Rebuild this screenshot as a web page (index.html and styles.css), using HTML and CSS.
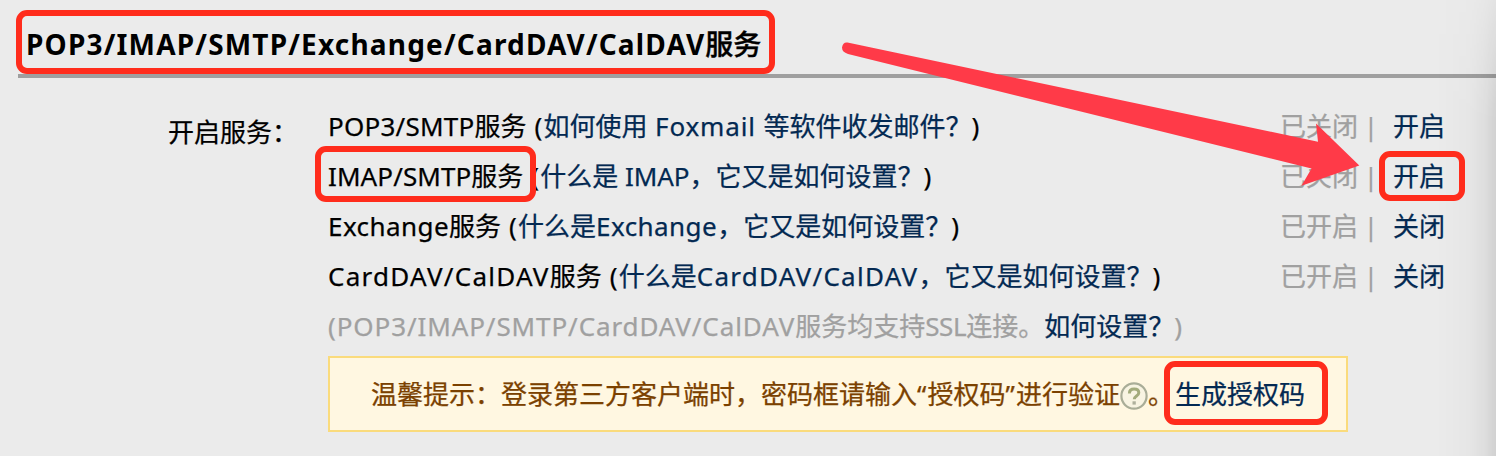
FILE: index.html
```
<!DOCTYPE html>
<html lang="zh-CN">
<head>
<meta charset="utf-8">
<title>POP3/IMAP/SMTP/Exchange/CardDAV/CalDAV服务</title>
<link rel="stylesheet" href="styles.css">
</head>
<body>
<main class="page">
  <h2 class="title"><span class="title-latin">POP3/IMAP/SMTP/Exchange/CardDAV/CalDAV</span><span class="title-cjk">服务</span></h2>
  <section class="services">
    <div class="label">开启服务：</div>
    <div class="content">
      <div class="row">
        <div><span class="w-pop">POP3/SMTP</span>服务<span class="paren"> (</span><a class="link">如何使用<span class="w-foxmail"> Foxmail </span>等软件收发邮件？</a>)</div>
        <div class="state"><span>已关闭</span><span class="bar">|</span><a class="link">开启</a></div>
      </div>
      <div class="row">
        <div><span class="w-imap">IMAP/SMTP</span>服务<span class="paren"> (</span><a class="link">什么是<span class="w-imap-short"> IMAP</span>，它又是如何设置？</a>)</div>
        <div class="state"><span>已关闭</span><span class="bar">|</span><a class="link">开启</a></div>
      </div>
      <div class="row">
        <div><span class="w-exchange">Exchange</span>服务<span class="paren"> (</span><a class="link">什么是<span class="w-exchange">Exchange</span>，它又是如何设置？</a>)</div>
        <div class="state"><span>已开启</span><span class="bar">|</span><a class="link">关闭</a></div>
      </div>
      <div class="row">
        <div><span class="w-dav">CardDAV/CalDAV</span>服务<span class="paren"> (</span><a class="link">什么是<span class="w-dav">CardDAV/CalDAV</span>，它又是如何设置？</a>)</div>
        <div class="state"><span>已开启</span><span class="bar">|</span><a class="link">关闭</a></div>
      </div>
      <div class="row note">
        <div><span class="w-all">(POP3/IMAP/SMTP/CardDAV/CalDAV</span>服务均支持<span class="w-ssl">SSL</span>连接。<a class="link">如何设置？</a>)</div>
      </div>
      <div class="tip"><span>温馨提示：登录第三方客户端时，密码框请输入<span class="quote">“</span>授权码<span class="quote">”</span>进行验证</span><svg class="help" viewBox="0 0 28 28" width="28" height="28"><circle cx="14" cy="14" r="12.6" fill="#f8f4e2" stroke="#a9ad97" stroke-width="2.2"/><path d="M9.4 11.4C9.4 8.400 11.300 7 14.100 7c2.800 0 4.700 1.400 4.700 3.700 0 3.400-4.500 3.300-4.500 6.600" fill="none" stroke="#a3ab7c" stroke-width="3"/><rect x="12.500" y="19.300" width="3.300" height="3.300" fill="#aeb09c"/></svg><span>。</span><a class="link">生成授权码</a></div>
    </div>
  </section>
  <div class="edge-shade"></div>
  <div class="mark mark-title"></div>
  <div class="mark mark-imap"></div>
  <div class="mark mark-open"></div>
  <div class="mark mark-code"></div>
  <svg class="arrow" viewBox="0 0 1496 456" width="1496" height="456"><path d="M847.5 42.5L1318 141.7L1316 123.5L1359.3 165.5L1301.5 185.7L1311.5 168.5L848 54Q842 52 842 47.5Q843 41.800 847.500 42.500Z" fill="#ff3a48"/></svg>
</main>
</body>
</html>
```
FILE: styles.css
```
body {
  margin: 0;
  background: #ebebeb;
  color: #000;
  font: 26px/50px "Noto Sans", "Noto Sans CJK SC", sans-serif;
  -webkit-text-stroke: 0.25px currentColor;
}
.page {
  position: relative;
  width: 1496px;
  height: 456px;
  overflow: hidden;
}
.title {
  margin: 0 0 0 18px;
  height: 55px;
  padding: 19px 0 0 8px;
  border-bottom: 4px solid #9f9f9f;
  font-size: 28px;
  line-height: 50px;
  font-weight: 700;
  -webkit-text-stroke: 0;
}
.title-latin { letter-spacing: 1.19px; }
.title-cjk { font-weight: 500; -webkit-text-stroke: 0.4px currentColor; }
.services {
  display: flex;
  padding: 23px 51px 0 168px;
}
.label { width: 160px; padding-top: 6px; flex: none; }
.content { flex: 1; }
.row {
  display: flex;
  justify-content: space-between;
  height: 50px;
  white-space: pre;
}
.state { display: flex; align-items: center; color: #a0a0a0; }
.bar { width: 35px; box-sizing: border-box; padding-right: 9px; text-align: center; }
.link { color: #032952; text-decoration: none; }
.note { color: #a0a0a0; }
.paren { letter-spacing: 1.2px; }
.w-pop { letter-spacing: 0.23px; }
.w-foxmail { letter-spacing: 0.85px; }
.w-imap { letter-spacing: 0.1px; }
.w-imap-short { letter-spacing: -0.1px; }
.w-exchange { letter-spacing: 0.44px; }
.w-dav { letter-spacing: 1.27px; }
.w-all { letter-spacing: 0.9px; }
.w-ssl { letter-spacing: -0.4px; }
.tip {
  display: flex;
  align-items: center;
  box-sizing: border-box;
  width: 1020px;
  height: 76px;
  margin-top: 5px;
  padding-left: 41px;
  border: 2px solid #fadb7c;
  background: #fff7e1;
  color: #7b4100;
  white-space: pre;
}
.tip .link { margin-left: 1px; }
.quote { display: inline-block; width: 10.5px; }
.help { margin-top: 3px; }
.edge-shade {
  position: absolute;
  inset: 0 0 0 auto;
  width: 60px;
  background: linear-gradient(90deg, rgba(0,0,0,0), rgba(0,0,0,.02) 55%, rgba(0,0,0,.05) 80%, rgba(0,0,0,.11));
  -webkit-mask-image: linear-gradient(rgba(0,0,0,.3), #000 120px);
  mask-image: linear-gradient(rgba(0,0,0,.3), #000 120px);
}
.mark {
  position: absolute;
  box-sizing: border-box;
  border: 6px solid #ff2c1c;
  border-radius: 11px;
}
.mark-title { left: 16px; top: 10px; width: 759px; height: 64px; }
.mark-imap { left: 315px; top: 146px; width: 221px; height: 56px; }
.mark-open { left: 1379px; top: 151px; width: 86px; height: 50px; }
.mark-code { left: 1164px; top: 361px; width: 164px; height: 64px; }
.arrow { position: absolute; left: 0; top: 0; }
```
